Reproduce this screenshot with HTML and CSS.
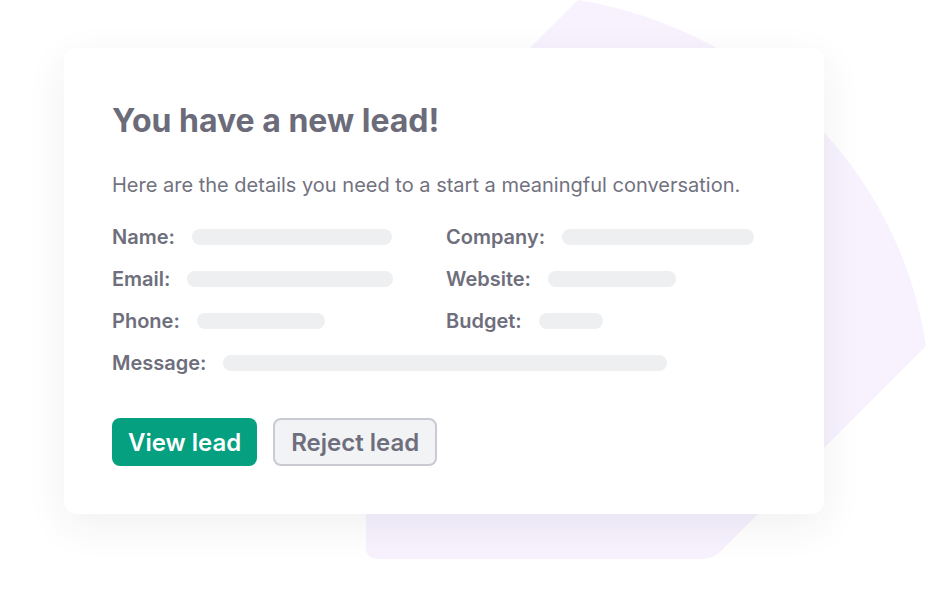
FILE: index.html
```html
<!doctype html>
<html lang="en">
  <head>
    <meta charset="UTF-8" />
    <meta name="viewport" content="width=device-width, initial-scale=1.0" />
    <title>New lead</title>
    <link rel="stylesheet" href="styles.css">
  </head>
  <body>
    <div class="stage">
      <!-- decorative blob behind the card -->
      <svg class="blob" width="926" height="594" viewBox="0 0 926 594" aria-hidden="true">
        <path d="M366 212 L578 0 C760 30 900 170 926 346 L722 550 Q714 559 702 559 L378 559 Q366 559 366 547 Z" fill="#f7f2fe" />
      </svg>
      <div class="card">
        <h1 class="title">You have a new lead!</h1>
        <p class="intro">Here are the details you need to a start a meaningful conversation.</p>
        <div class="fields">
          <div class="field">
            <span class="label">Name:</span><span class="bar" style="width: 200px"></span>
          </div>
          <div class="field">
            <span class="label">Company:</span><span class="bar" style="width: 192px"></span>
          </div>
          <div class="field">
            <span class="label">Email:</span><span class="bar" style="width: 206px"></span>
          </div>
          <div class="field">
            <span class="label">Website:</span><span class="bar" style="width: 128px"></span>
          </div>
          <div class="field">
            <span class="label">Phone:</span><span class="bar" style="width: 128px"></span>
          </div>
          <div class="field">
            <span class="label">Budget:</span><span class="bar" style="width: 64px"></span>
          </div>
          <div class="field field-wide">
            <span class="label">Message:</span><span class="bar" style="width: 444px"></span>
          </div>
        </div>
        <div class="actions">
          <button class="btn btn-primary">View lead</button>
          <button class="btn btn-secondary">Reject lead</button>
        </div>
      </div>
    </div>
  </body>
</html>
```
FILE: styles.css
```css
html,
body {
  margin: 0;
  padding: 0;
  background: #fff;
}
body {
  font-family: "Inter", sans-serif;
  color: #6e6e7c;
  width: 926px;
  height: 594px;
  overflow: hidden;
}
.stage {
  position: relative;
  height: 594px;
  padding: 48px 0 0 64px;
  box-sizing: border-box;
}
.blob {
  position: absolute;
  top: 0;
  left: 0;
}
.card {
  position: relative;
  width: 760px;
  box-sizing: border-box;
  padding: 53px 48px 48px;
  background: #fff;
  border-radius: 12px;
  box-shadow: 0 12px 40px 0 rgba(40, 40, 60, 0.07);
}
.title {
  margin: 0;
  font-size: 32px;
  line-height: 40px;
  font-weight: 700;
  color: #6b6b7a;
}
.intro {
  margin: 30px 0 0;
  font-size: 20px;
  line-height: 28px;
  color: #72727f;
}
.fields {
  margin-top: 24px;
  display: grid;
  grid-template-columns: 334px 1fr;
  row-gap: 14px;
}
.field {
  display: flex;
  align-items: center;
  gap: 17px;
  height: 28px;
}
.field-wide {
  grid-column: 1 / 3;
}
.label {
  font-size: 20px;
  font-weight: 600;
  color: #6e6e7c;
}
.bar {
  display: block;
  height: 16px;
  border-radius: 8px;
  background: #eeeff1;
}
.actions {
  margin-top: 41px;
  display: flex;
  gap: 16px;
}
.btn {
  height: 48px;
  padding: 0 16px;
  border-radius: 8px;
  font-family: "Inter", sans-serif;
  font-size: 24px;
  font-weight: 600;
  box-sizing: border-box;
}
.btn-primary {
  background: #05a080;
  color: #fff;
  border: none;
}
.btn-secondary {
  background: #f2f3f5;
  color: #6e6e7c;
  border: 2px solid #c9cad2;
}
```
